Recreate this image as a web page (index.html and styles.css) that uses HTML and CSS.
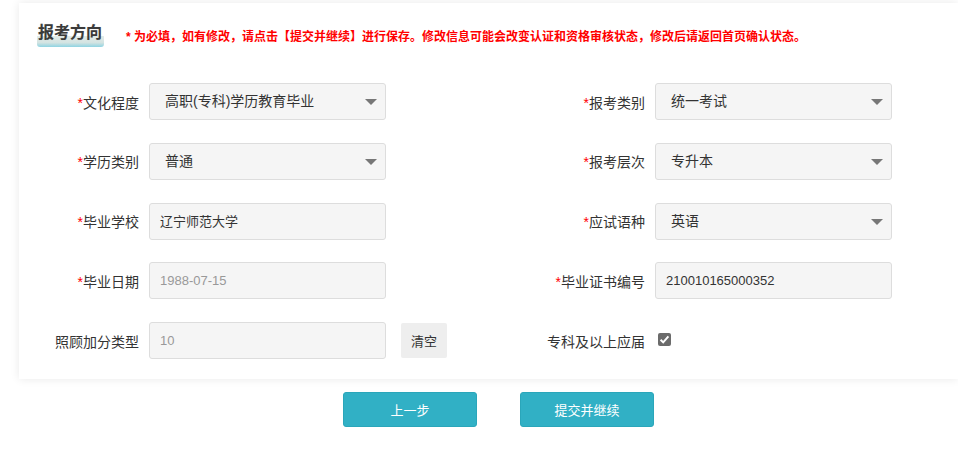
FILE: index.html
```html
<!DOCTYPE html>
<html lang="zh-CN">
<head>
  <meta charset="UTF-8" />
  <title>报考方向</title>
  <link rel="stylesheet" href="styles.css">
</head>
<body>
  <div class="card">
    <div class="head">
      <span class="title">报考方向</span>
      <span class="notice">* 为必填，如有修改，请点击【提交并继续】进行保存。修改信息可能会改变认证和资格审核状态，修改后请返回首页确认状态。</span>
    </div>

    <div class="form">
      <div class="row">
        <div class="field">
          <label class="lbl"><i>*</i>文化程度</label>
          <div class="select">高职(专科)学历教育毕业</div>
        </div>
        <div class="field">
          <label class="lbl"><i>*</i>报考类别</label>
          <div class="select">统一考试</div>
        </div>
      </div>

      <div class="row">
        <div class="field">
          <label class="lbl"><i>*</i>学历类别</label>
          <div class="select">普通</div>
        </div>
        <div class="field">
          <label class="lbl"><i>*</i>报考层次</label>
          <div class="select">专升本</div>
        </div>
      </div>

      <div class="row">
        <div class="field">
          <label class="lbl"><i>*</i>毕业学校</label>
          <div class="input">辽宁师范大学</div>
        </div>
        <div class="field">
          <label class="lbl"><i>*</i>应试语种</label>
          <div class="select">英语</div>
        </div>
      </div>

      <div class="row">
        <div class="field">
          <label class="lbl"><i>*</i>毕业日期</label>
          <div class="input disabled">1988-07-15</div>
        </div>
        <div class="field">
          <label class="lbl"><i>*</i>毕业证书编号</label>
          <div class="input">210010165000352</div>
        </div>
      </div>

      <div class="row">
        <div class="field">
          <label class="lbl">照顾加分类型</label>
          <div class="input disabled">10</div>
          <button class="btn-clear">清空</button>
        </div>
        <div class="field">
          <label class="lbl">专科及以上应届</label>
          <span class="check">
            <svg width="13" height="13" viewBox="0 0 13 13"><path d="M2.6 6.8 L5.2 9.4 L10.4 3.4" fill="none" stroke="#fff" stroke-width="2"/></svg>
          </span>
        </div>
      </div>
    </div>
  </div>

  <div class="actions">
    <button class="btn">上一步</button>
    <button class="btn">提交并继续</button>
  </div>
</body>
</html>
```

FILE: styles.css
```css
body {
  margin: 0;
  background: #fff;
  font-family: "Liberation Sans", "Noto Sans CJK SC", sans-serif;
  color: #333;
}
.card {
  margin: 3px 0 0 19px;
  padding: 20px 0 20px 0;
  background: #fff;
  box-shadow: 0 0 9px rgba(0, 0, 0, 0.09);
}
.head {
  display: flex;
  align-items: flex-start;
  padding-left: 18px;
  height: 26px;
}
.title {
  font-size: 16px;
  line-height: 20px;
  font-weight: bold;
  color: #3a3a3a;
  padding: 0 2px 4px 1px;
  border-radius: 0 0 3px 3px;
  background: linear-gradient(to bottom, transparent 55%, #e3ecea 55%, #d3e3e1 82%, #8fd4e2 100%);
  text-shadow: 0 0 1px rgba(0, 0, 0, 0.2);
}
.notice {
  margin: 6px 0 0 22px;
  font-size: 12px;
  line-height: 16px;
  font-weight: bold;
  color: #f00;
  white-space: nowrap;
}
.form {
  margin-top: 34px;
}
.row {
  display: flex;
  height: 37px;
  margin-bottom: 22.75px;
}
.row:last-child {
  margin-bottom: 0;
}
.field {
  flex: 0 0 506px;
  display: flex;
  align-items: center;
}
.field:last-child {
  flex: 1 1 auto;
}
.lbl {
  width: 120px;
  margin-right: 10px;
  text-align: right;
  font-size: 14px;
  color: #333;
}
.lbl i {
  font-style: normal;
  color: #f00;
}
.select,
.input {
  box-sizing: border-box;
  width: 237px;
  height: 37px;
  line-height: 35px;
  border: 1px solid #ddd;
  border-radius: 3px;
  background: #f5f5f5;
  color: #333;
}
.select {
  position: relative;
  padding-left: 15px;
  font-size: 14px;
}
/* dropdown arrow */
.select::after {
  content: "";
  position: absolute;
  right: 8px;
  top: 15px;
  border-left: 6px solid transparent;
  border-right: 6px solid transparent;
  border-top: 6px solid #777;
}
.input {
  padding-left: 10px;
  font-size: 13px;
}
.input.disabled {
  color: #999;
}
.btn-clear {
  margin-left: 15px;
  height: 35px;
  padding: 0 10px;
  border: none;
  border-radius: 2px;
  background: #eee;
  color: #333;
  font-family: inherit;
  font-size: 13px;
}
.check {
  display: inline-flex;
  margin-left: 3px;
  margin-top: -3px;
  width: 13px;
  height: 13px;
  border-radius: 2px;
  background: #6b6b6b;
}
.actions {
  display: flex;
  gap: 43px;
  margin: 13px 0 0 343px;
}
.btn {
  width: 134px;
  height: 35px;
  border: 1px solid #2aa6ba;
  border-radius: 3px;
  background: #31b0c5;
  color: #fff;
  font-family: inherit;
  font-size: 13px;
  cursor: pointer;
}
```
